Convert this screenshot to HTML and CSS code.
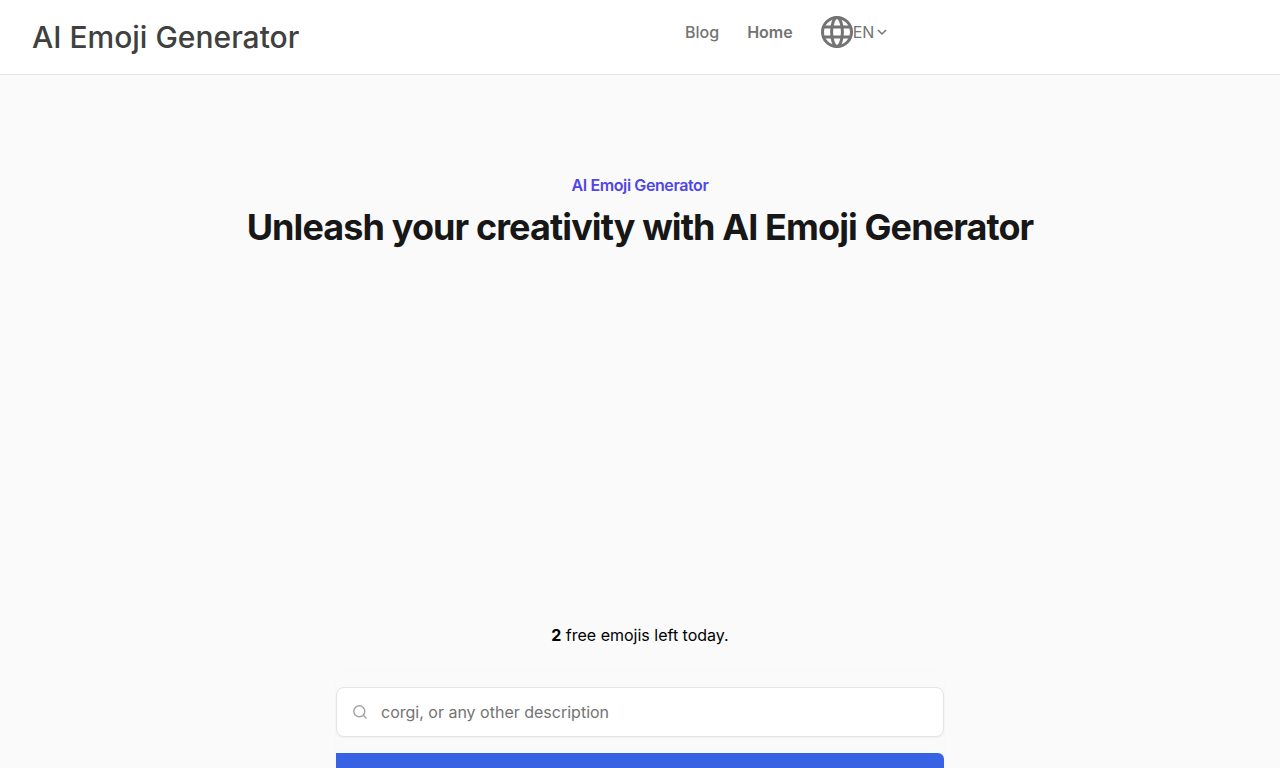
FILE: index.html
```html
<!DOCTYPE html>
<html lang="en">
<head>
    <meta charset="UTF-8">
    <meta name="viewport" content="width=device-width, initial-scale=1.0">
    <title>AI Emoji Generator</title>
    <link rel="stylesheet" href="styles.css">
</head>
<body>
    <header class="header">
        <a href="/" class="brand">AI Emoji Generator</a>
        <nav class="nav">
            <a href="/blog">Blog</a>
            <a href="/" class="active">Home</a>
            <button type="button" class="lang">
                <svg class="globe" viewBox="0 0 32 32" fill="none" stroke="currentColor" stroke-width="3" aria-hidden="true">
                    <circle cx="16" cy="16" r="14.5"/>
                    <ellipse cx="16" cy="16" rx="5.4" ry="14.5"/>
                    <path d="M2.5 11h27M2.5 21h27"/>
                </svg>
                <span>EN</span>
                <svg class="chevron" viewBox="0 0 16 16" fill="none" stroke="currentColor" stroke-width="1.5" aria-hidden="true">
                    <path d="M4 6l4 4 4-4"/>
                </svg>
            </button>
        </nav>
    </header>

    <main class="main">
        <section class="hero">
            <h2>AI Emoji Generator</h2>
            <h1>Unleash your creativity with AI Emoji Generator</h1>
        </section>

        <p class="quota"><strong>2</strong> free emojis left today.</p>

        <form class="prompt-form">
            <div class="field">
                <svg class="search-icon" viewBox="0 0 16 16" fill="none" stroke="currentColor" stroke-width="1.4" stroke-linecap="round" aria-hidden="true">
                    <circle cx="7.3" cy="7.3" r="5.5"/>
                    <path d="M11.3 11.3l2.7 2.7"/>
                </svg>
                <input type="text" aria-label="Emoji description" placeholder="corgi, or any other description">
            </div>
            <button type="submit" class="submit" aria-label="Generate"></button>
        </form>
    </main>
</body>
</html>
```

FILE: styles.css
```css
* {
    box-sizing: border-box;
}

body {
    margin: 0;
    background: #fafafa;
    color: #000;
    font-family: Inter, "Liberation Sans", sans-serif;
    font-size: 16px;
    line-height: 24px;
}

h1,
h2,
p {
    margin: 0;
}

.header {
    display: grid;
    grid-template-columns: 1fr 1fr;
    align-items: start;
    padding: 12px 32px;
    background: #fff;
    border-bottom: 1px solid #e5e5e5;
}

.brand {
    padding: 7px 0;
    color: #404040;
    font-size: 30px;
    font-weight: 500;
    line-height: 36px;
    text-decoration: none;
}

.nav {
    display: flex;
    align-items: center;
    gap: 28px;
    height: 40px;
    padding-left: 45px;
    color: #737373;
    font-weight: 500;
}

.nav a {
    color: inherit;
    text-decoration: none;
}

.nav .active {
    font-weight: 600;
}

.lang {
    display: flex;
    align-items: center;
    padding: 0;
    border: 0;
    background: none;
    color: inherit;
    font: inherit;
    font-weight: 400;
    cursor: pointer;
}

.globe {
    width: 32px;
    height: 32px;
}

.chevron {
    width: 16px;
    height: 16px;
}

.hero {
    padding: 98px 32px 0;
    text-align: center;
}

.hero h2 {
    color: #4f46e5;
    font-size: 16px;
    font-weight: 600;
    line-height: 24px;
    letter-spacing: -0.025em;
}

.hero h1 {
    margin-top: 10px;
    color: #171717;
    font-size: 36px;
    font-weight: 700;
    line-height: 40px;
    letter-spacing: -0.025em;
}

.quota {
    margin-top: 376px;
    text-align: center;
}

.prompt-form {
    display: flex;
    flex-direction: column;
    gap: 16px;
    max-width: 608px;
    margin: 24px auto 0;
    padding-top: 16px;
    border-radius: 8px;
    box-shadow: 0 0 2px rgba(0, 0, 0, 0.03);
}

.field {
    display: flex;
    align-items: center;
    gap: 13px;
    height: 50px;
    padding: 0 15px;
    background: #fff;
    border: 1px solid #e5e5e5;
    border-radius: 8px;
    box-shadow: 0 1px 2px rgba(0, 0, 0, 0.05);
}

.search-icon {
    width: 16px;
    height: 16px;
    color: #a3a3a3;
}

.field input {
    flex: 1;
    padding: 0;
    border: 0;
    outline: 0;
    background: none;
    font: inherit;
}

.field input::placeholder {
    color: #737373;
}

.submit {
    height: 48px;
    border: 0;
    border-radius: 0 6px 6px 0;
    background: #3662e3;
    cursor: pointer;
}
```
